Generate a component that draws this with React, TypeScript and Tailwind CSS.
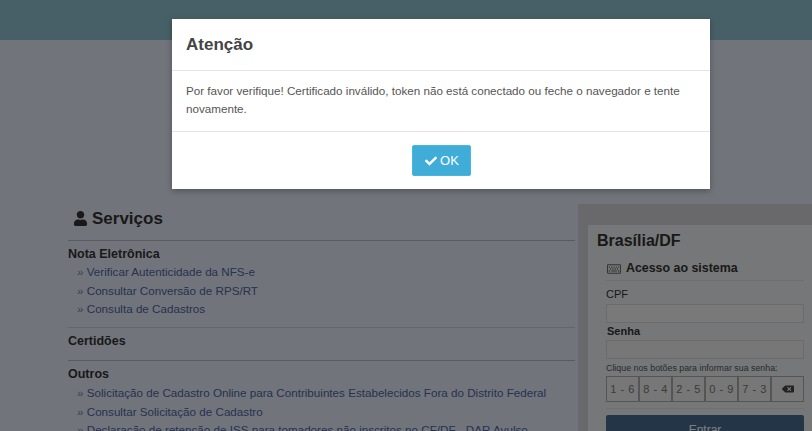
import { FaUser, FaCheck, FaBackspace, FaRegKeyboard } from "react-icons/fa";

const font = { fontFamily: '"Liberation Sans", Arial, sans-serif' };

function Links({ items, lower }: { items: string[]; lower?: boolean }) {
  return (
    <ul className={lower ? "pl-[9px] pt-[1px]" : "pl-[9px]"}>
      {items.map((t) => (
        <li key={t} className="h-[18.5px] whitespace-nowrap text-[11.65px] leading-[18.5px] text-[#50629f]">
          <span className="text-[#6f82ad]">» </span>
          {t}
        </li>
      ))}
    </ul>
  );
}

export default function App() {
  return (
    <div style={font} className="relative h-[431px] w-[812px] overflow-hidden bg-[#e2ebf7]">
      <header className="h-10 bg-[#8ec0ce]" />
      <main className="flex items-start pl-[68px] pt-[164px]">
        <section className="w-[507px] pt-[4px]">
          <h2 className="flex h-[33px] items-start gap-[4px] border-b border-[#b5b9c0] pl-[5px] text-[17px] font-bold leading-[22px] text-[#333]">
            <FaUser className="mt-[3px]" size={15} color="#333" />
            Serviços
          </h2>
          <div className="h-[87px] border-b border-[#c8ccd2] pt-[4px]">
            <h3 className="text-[12.5px] font-bold leading-[18px] text-[#333]">Nota Eletrônica</h3>
            <Links items={["Verificar Autenticidade da NFS-e", "Consultar Conversão de RPS/RT", "Consulta de Cadastros"]} />
          </div>
          <div className="h-[33px] border-b border-[#b5b9c0] pt-[4px]">
            <h3 className="text-[12.5px] font-bold leading-[18px] text-[#333]">Certidões</h3>
          </div>
          <div className="pt-[4px]">
            <h3 className="text-[12.5px] font-bold leading-[18px] text-[#333]">Outros</h3>
            <Links
              lower
              items={[
                "Solicitação de Cadastro Online para Contribuintes Estabelecidos Fora do Distrito Federal",
                "Consultar Solicitação de Cadastro",
                "Declaração de retenção de ISS para tomadores não inscritos no CF/DF - DAR Avulso",
              ]}
            />
          </div>
        </section>
        <aside className="ml-[3px] h-[227px] w-[234px] bg-[#d2d3d6] pl-[10px] pt-[21px]">
          <div className="h-[206px] bg-[#eceef0] pl-[9px] pr-[8px] pt-[5px]">
            <h2 className="text-[16px] font-bold leading-[21px] text-[#333]">Brasília/DF</h2>
            <h3 className="ml-[10px] mt-[7px] flex h-[21px] items-center gap-[5px] text-[12.4px] font-bold text-[#333]">
              <FaRegKeyboard size={14} color="#666" />
              Acesso ao sistema
            </h3>
            <div className="ml-[9px] mt-[1px] w-[198px]">
              <div className="border-t border-[#dddfe2] pt-[6px] text-[11px] leading-[14px] text-[#333]">CPF</div>
              <div className="mt-[3px] h-[19px] border border-[#d5d7da] bg-[#f2f2f2]" />
              <div className="mt-[1px] pl-[1px] text-[11px] font-bold leading-[15px] text-[#333]">Senha</div>
              <div className="mt-[1px] h-[19px] border border-[#d5d7da] bg-[#eeeeee]" />
              <div className="mt-[2px] whitespace-nowrap text-[8.85px] leading-[14px] text-[#555]">Clique nos botões para informar sua senha:</div>
              <div className="mt-[1px] border-b border-[#dddfe2] pb-[6px]">
                <div className="flex h-[26px]">
                  {["1 - 6", "8 - 4", "2 - 5", "0 - 9", "7 - 3"].map((k) => (
                    <div key={k} className="flex h-[26px] w-[33px] items-center justify-center border border-[#aaa] bg-[#eeeeee] text-[11px] tracking-[0.5px] text-[#777]">
                      {k}
                    </div>
                  ))}
                  <div className="flex h-[26px] flex-1 items-center justify-center border border-[#aaa] bg-[#eeeeee]">
                    <FaBackspace size={12} color="#444" />
                  </div>
                </div>
              </div>
              <div className="mt-[6px] flex h-[30px] items-center justify-center rounded-t-[2px] bg-[#4a6a90] text-[12px] text-white">Entrar</div>
            </div>
          </div>
        </aside>
      </main>

      <div className="absolute inset-0 bg-black/50" />

      <div className="absolute left-[172px] top-[19px] h-[170px] w-[538px] bg-white shadow-[0_2px_6px_rgba(0,0,0,0.3)]">
        <div className="flex h-[52px] items-center border-b border-[#e5e5e5] px-[14px] text-[17px] font-bold text-[#444]">Atenção</div>
        <div className="h-[61px] border-b border-[#e5e5e5] px-[14px] pt-[11px] text-[11.65px] leading-[18px] text-[#555]">
          Por favor verifique! Certificado inválido, token não está conectado ou feche o navegador e tente novamente.
        </div>
        <div className="flex justify-center pt-[13px]">
          <button className="flex h-[31px] w-[59px] items-center justify-center gap-[3px] rounded-[2px] border border-[#46b8da] bg-[#3fadd8] pl-[2px] text-[13px] text-white">
            <FaCheck size={12} />
            OK
          </button>
        </div>
      </div>
    </div>
  );
}
